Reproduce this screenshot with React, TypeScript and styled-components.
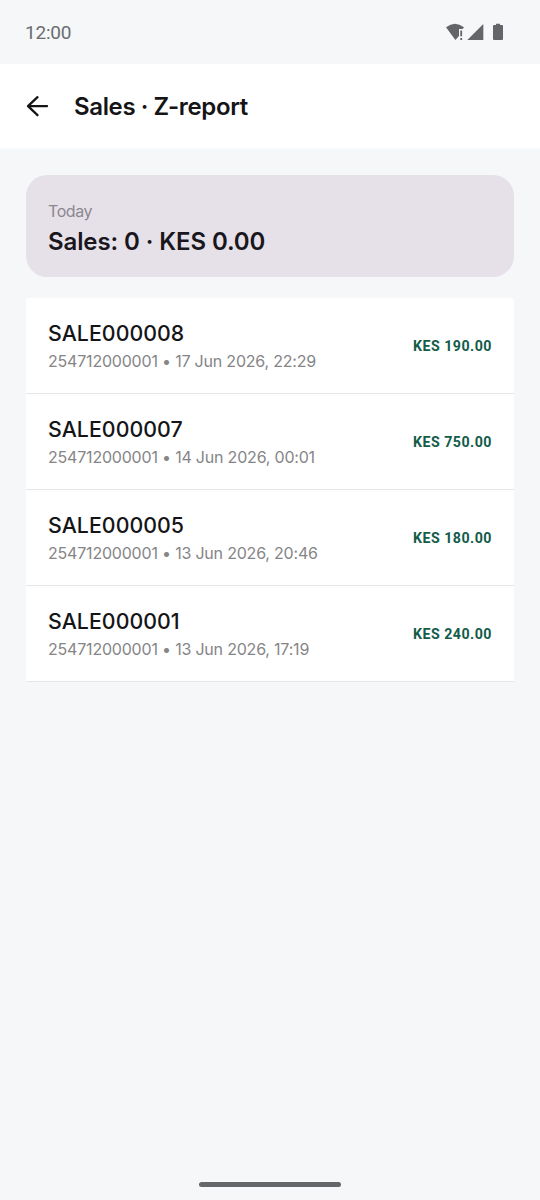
import React from "react";
import styled, { createGlobalStyle } from "styled-components";

const GlobalStyle = createGlobalStyle`
  *, *::before, *::after { box-sizing: border-box; }
  body { margin: 0; background: #f5f7f9; }
`;

const Screen = styled.div`
  display: flex;
  flex-direction: column;
  width: 540px;
  height: 1200px;
  background: #f5f7f9;
  color: #151517;
  font-family: Inter, sans-serif;
`;

const StatusBar = styled.div`
  display: flex;
  justify-content: space-between;
  height: 64px;
  padding: 22px 36px 0 25px;
  color: #646568;
`;

const Clock = styled.span`
  color: #6b6c6f;
  font: 400 19px/22px Roboto, sans-serif;
  letter-spacing: -0.2px;
`;

const StatusIcons = styled.svg`
  display: block;
  width: 60px;
  height: 20px;
`;

const Header = styled.header`
  display: flex;
  align-items: center;
  height: 85px;
  padding: 0 26px;
  background: #fff;
  border-bottom: 1px solid #f9fafb;
`;

const BackButton = styled.button`
  display: flex;
  width: 48px;
  padding: 0;
  border: 0;
  background: none;
  color: inherit;
`;

const Title = styled.h1`
  margin: 0;
  padding-top: 1px;
  font-size: 24px;
  font-weight: 600;
  line-height: 32px;
  letter-spacing: -0.35px;
  word-spacing: -0.2px;
`;

const Content = styled.main`
  display: flex;
  flex: 1;
  flex-direction: column;
  gap: 21px;
  padding: 26px 26px 0;
`;

const Summary = styled.section`
  height: 102px;
  padding: 25px 21px 0 22px;
  border-radius: 21px;
  background: #e6e1e8;
`;

const SummaryLabel = styled.div`
  color: #8b878e;
  font-size: 16px;
  line-height: 22px;
  letter-spacing: -0.4px;
`;

const SummaryValue = styled.div`
  margin-top: 4px;
  color: #1a161d;
  font-size: 24px;
  font-weight: 600;
  line-height: 32px;
  letter-spacing: -0.1px;
`;

const SalesList = styled.ul`
  margin: 0;
  padding: 0;
  list-style: none;
`;

const SaleRow = styled.li`
  display: flex;
  align-items: center;
  justify-content: space-between;
  height: 96px;
  padding: 0 22px;
  border-bottom: 1px solid #e6e7e9;
  background: #fff;
  &:first-child { border-radius: 3px 3px 0 0; }
`;

const SaleNumber = styled.div`
  padding-top: 1px;
  font-size: 21.3px;
  font-weight: 550;
  line-height: 28px;
  letter-spacing: 0.05px;
`;

const SaleMeta = styled.div`
  margin-top: 2px;
  color: #858587;
  font-size: 16px;
  line-height: 24px;
  letter-spacing: -0.2px;
`;

const Amount = styled.span`
  color: #125c49;
  font: 700 14.2px/20px Roboto, sans-serif;
  letter-spacing: 0.5px;
`;

const NavigationArea = styled.footer`
  display: flex;
  justify-content: center;
  height: 19px;
  padding-top: 1px;
`;

const HomeIndicator = styled.div`
  width: 142px;
  height: 5px;
  border-radius: 3px;
  background: #656669;
`;

const sales = [
  { id: "SALE000008", date: "17 Jun 2026, 22:29", amount: "KES 190.00" },
  { id: "SALE000007", date: "14 Jun 2026, 00:01", amount: "KES 750.00" },
  { id: "SALE000005", date: "13 Jun 2026, 20:46", amount: "KES 180.00" },
  { id: "SALE000001", date: "13 Jun 2026, 17:19", amount: "KES 240.00" },
];

export default function App() {
  return (
    <Screen>
      <GlobalStyle />
      <StatusBar>
        <Clock>12:00</Clock>
        <StatusIcons viewBox="0 0 60 20" fill="currentColor" aria-hidden="true">
          <path d="M2 5.2Q11 -1.9 20 5.2L18.6 7H15V14L11.4 18Z" />
          <path d="M16.3 8.5h1.8v5.7h-1.8zM16.3 16h1.8v2h-1.8z" />
          <path d="M39.3 2v16H23.3z" />
          <path d="M52 3V1.7h4V3h2q1 0 1 1v13q0 1-1 1h-8q-1 0-1-1V4q0-1 1-1z" />
        </StatusIcons>
      </StatusBar>
      <Header>
        <BackButton aria-label="Back">
          <svg width="23" height="22" viewBox="0 0 23 22" fill="none" stroke="currentColor" strokeWidth="2.3" strokeLinecap="round" strokeLinejoin="round">
            <path d="M11.5 2.2L2 11.2l9.5 9M2.5 11.2h18.5" />
          </svg>
        </BackButton>
        <Title>Sales · Z-report</Title>
      </Header>
      <Content>
        <Summary>
          <SummaryLabel>Today</SummaryLabel>
          <SummaryValue>Sales: 0 · KES 0.00</SummaryValue>
        </Summary>
        <SalesList>
          {sales.map((sale) => (
            <SaleRow key={sale.id}>
              <div>
                <SaleNumber>{sale.id}</SaleNumber>
                <SaleMeta>254712000001 • {sale.date}</SaleMeta>
              </div>
              <Amount>{sale.amount}</Amount>
            </SaleRow>
          ))}
        </SalesList>
      </Content>
      <NavigationArea>
        <HomeIndicator />
      </NavigationArea>
    </Screen>
  );
}
